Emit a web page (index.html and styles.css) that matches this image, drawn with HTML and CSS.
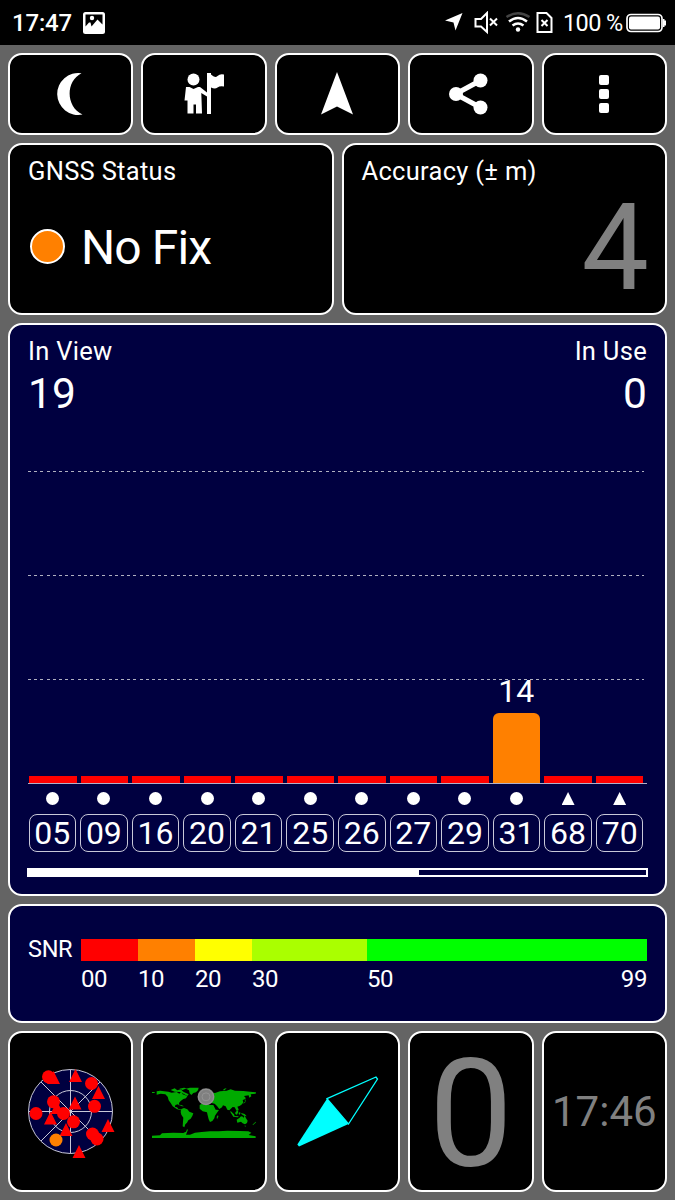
FILE: index.html
```
<!DOCTYPE html>
<html lang="en">
<head>
    <meta charset="utf-8">
    <title>GNSS Status</title>
    <link rel="stylesheet" href="styles.css">
</head>
<body>
    <div class="statusbar">
        <span class="clock">17:47</span>
        <svg class="picture" width="22" height="22" viewBox="0 0 22 22">
            <rect width="22" height="22" rx="2.5" fill="#fff"/>
            <path d="M2.500 2.500h17v10l-5-5-6 7-1-4h-1.500l-3.500 4z" fill="#000"/>
            <circle cx="9" cy="6" r="2.200" fill="#fff"/>
        </svg>
        <svg class="icons" width="108" height="24" viewBox="0 0 108 24">
            <path d="M0 9.500 17.500 2 10.500 19.500 8.500 11.500Z" fill="#fff"/>
            <path d="M30.500 8h5.500l6-6v19l-6-5.500h-5.500z" fill="none" stroke="#fff" stroke-width="2"/>
            <path d="m45 7.500 7 7m0-7-7 7" stroke="#fff" stroke-width="2"/>
            <path d="M61.500 6q11.500-7.500 23 0" fill="none" stroke="#444" stroke-width="2.500"/>
            <path d="M64 10.500q9-7 18 0M67.500 14.500q5.500-4 11 0" fill="none" stroke="#fff" stroke-width="2.500"/>
            <circle cx="73" cy="18.500" r="2.200" fill="#fff"/>
            <path d="M92.500 2h9l5 5v14h-14z" fill="none" stroke="#fff" stroke-width="2"/>
            <path d="m96.500 9 6 6m0-6-6 6" stroke="#fff" stroke-width="2"/>
        </svg>
        <span class="percent">100 %</span>
        <svg class="battery" width="41" height="20" viewBox="0 0 41 20">
            <rect x="1" y="1.500" width="35" height="17" rx="4" fill="none" stroke="#fff" stroke-width="1.700"/>
            <rect x="3" y="3.500" width="31" height="13" rx="2" fill="#fff"/>
            <path d="M37 6h1.500v1.500h1.500v5h-1.500v1.500h-1.500z" fill="#fff"/>
        </svg>
    </div>

    <div class="screen">
        <div class="row toolbar">
            <button class="card">
                <svg width="44" height="44" viewBox="0 0 44 44"><path d="M33.500 1.200A21 21 0 1 0 34.500 42.500C17.500 35 17.500 9 33.500 1.200Z" fill="#fff" transform="translate(-1)"/></svg>
            </button>
            <button class="card">
                <svg width="44" height="44" viewBox="0 0 44 44" fill="#fff">
                    <circle cx="11.500" cy="7.500" r="6"/>
                    <path d="M4 15h3.500l4 2 4.500-2h2l7 5.500v4l-5.700-3.500.7 20.500h-6v-9h-2.500v9h-6V28.500H2.500z"/>
                    <path d="M25 1h4v1.500q4 4 6.500 1.500t6.500-1.500v12q-4-1-6.500 1t-6.500 0v26.500h-4z"/>
                </svg>
            </button>
            <button class="card">
                <svg width="44" height="44" viewBox="0 0 44 44"><path d="M22 0 38 42.500 22 34.500 6 42.500Z" fill="#fff"/></svg>
            </button>
            <button class="card">
                <svg width="44" height="44" viewBox="2.500 0 44 44" fill="#fff">
                    <path d="M34 8.500 9 22 34 35.500" fill="none" stroke="#fff" stroke-width="5"/>
                    <circle cx="34" cy="8.500" r="7"/><circle cx="9.500" cy="22" r="7"/><circle cx="34" cy="35.500" r="7"/>
                </svg>
            </button>
            <button class="card">
                <svg width="44" height="44" viewBox="0 0 44 44" fill="#fff">
                    <rect x="17" y="3" width="10" height="10" rx="2"/>
                    <rect x="17" y="17" width="10" height="10" rx="2"/>
                    <rect x="17" y="31" width="10" height="10" rx="2"/>
                </svg>
            </button>
        </div>

        <div class="row status">
            <div class="card">
                <div class="label">GNSS Status</div>
                <div class="fix"><span class="dot"></span>No Fix</div>
            </div>
            <div class="card">
                <div class="label">Accuracy (± m)</div>
                <div class="accuracy">4</div>
            </div>
        </div>

        <div class="card satellites">
            <div class="counts">
                <div><div class="label">In View</div><div class="count">19</div></div>
                <div class="right"><div class="label">In Use</div><div class="count">0</div></div>
            </div>
            <div class="chart" id="chart"></div>
            <div class="ids" id="ids"></div>
            <div class="scroll"><div class="thumb"></div></div>
        </div>

        <div class="card snr">
            <span class="snr-title">SNR</span>
            <div class="scale">
                <div class="s0"><span>00</span></div>
                <div class="s10"><span>10</span></div>
                <div class="s20"><span>20</span></div>
                <div class="s30"><span>30</span></div>
                <div class="s50"><span>50</span><span>99</span></div>
            </div>
        </div>

        <div class="row pages">
            <div class="card">
                <svg width="121" height="157" viewBox="10 1033 121 157">
                    <circle cx="70.500" cy="1111.500" r="42" fill="#000040"/>
                    <g fill="none" stroke="#c8c8d8" stroke-width="1">
                        <circle cx="70.500" cy="1111.500" r="42"/><circle cx="70.500" cy="1111.500" r="21"/>
                        <path d="M28.500 1111.500h84M70.500 1069.500v84M41 1082l59 59M100 1082l-59 59"/>
                    </g>
                    <g fill="#f00">
                        <circle cx="48.500" cy="1076.800" r="6.500"/><circle cx="91.500" cy="1083.500" r="6.500"/>
                        <circle cx="53.500" cy="1101.800" r="6.500"/><circle cx="94.500" cy="1106.300" r="6.500"/>
                        <circle cx="36" cy="1113.500" r="6.500"/><circle cx="63.500" cy="1113.500" r="6.500"/>
                        <circle cx="73.500" cy="1121.800" r="6.500"/><circle cx="92.500" cy="1134" r="6.500"/>
                        <circle cx="97" cy="1139" r="6.500"/>
                        <path d="M53.500 1071l6.500 13h-13zM75.500 1069l6.500 13h-13zM98.500 1086l6.500 13h-13zM75 1096.500l6.500 13h-13zM57 1101l6.500 13h-13zM50.500 1111.500l6.500 13h-13zM66 1123l6.500 13h-13zM108 1119l6.500 13h-13zM79 1145l6.500 13h-13z"/>
                    </g>
                    <circle cx="56" cy="1140" r="6.500" fill="#ff8000"/>
                </svg>
            </div>
            <div class="card">
                <svg width="121" height="157" viewBox="143 1033 121 157">
                    <g fill="#00aa00" transform="translate(140 1025) scale(.3333)">
                        <!-- Americas and Greenland -->
                        <path d="M36 201h8v3h-8zM50 199L60 197 85 200 95 203 110 201 118 206 124 200 128 208 142 213 138 220 130 222 122 228 117 234 118 242 114 238 106 240 105 246 111 247 115 252 126 254 122 256 110 252 98 244 92 234 86 226 83 215 76 208 62 206 50 209Z"/>
                        <path d="M92 195L104 190 112 196 122 193 130 200 146 208 142 213 132 207 120 201 104 200ZM118 191L132 188 140 190 128 195ZM138 191L150 188 176 188 174 196 168 202 160 204 154 210 149 205 147 196ZM116 239l8 1 8 4-6 0z"/>
                        <path d="M124 252L132 249 142 253 148 260 160 265 157 273 152 281 145 286 141 293 136 298 133 307 128 304 129 290 130 278 124 269 122 261Z"/>
                        <!-- Africa -->
                        <path d="M179 240L188 235 200 236 208 240 220 240 227 254 237 255 230 265 225 272 223 280 217 288 210 291 206 283 203 271 201 262 188 259 179 251Z"/>
                        <path d="M230 276l4-6 1 5-4 8z"/>
                        <!-- Europe and Asia -->
                        <path d="M184 236L186 226 194 220 198 210 208 202 225 204 240 199 260 197 272 193 285 197 310 198 330 200 348 202 347 206 332 208 334 214 328 218 326 211 312 213 318 220 308 226 310 232 306 238 300 242 292 245 295 252 290 258 284 247 278 246 268 256 262 254 257 244 249 241 246 247 238 252 231 243 224 236 212 233 204 230 196 230Z"/>
                        <path d="M248 196l5-5 7-2-6 7zM314 220l3 6-1 6-6 4 1-3 4-3z"/>
                        <!-- Islands and Australia -->
                        <path d="M272 258l10 10 2 5 12 1-2 3-14-2-9-14zM286 262l7-6 2 5-4 8-5-2zM297 262l5 1-3 6-3-2zM291 247l5 6-2 5-4-7zM304 264l10 3 6 7-8-2-8-5z"/>
                        <path d="M290 284L298 279 303 274 309 275 311 279 314 271 318 280 323 287 321 294 315 298 308 295 303 290 292 293ZM313 302h5l-2 3zM345 290l3 2-4 4-5 4-1-2 6-4z"/>
                        <!-- Antarctica -->
                        <path d="M36 339V332L60 331 66 325 100 323 130 324 138 320 141 313 144 314 138 329 150 329 165 323 185 321 210 319 236 319 262 317 300 318 325 319 334 323 326 330 347 334V339Z"/>
                    </g>
                    <circle cx="206" cy="1096.800" r="8.500" fill="#808080"/>
                    <circle cx="206" cy="1096.800" r="7.500" fill="none" stroke="#949494" stroke-width="1"/>
                    <circle cx="206" cy="1096.800" r="4" fill="none" stroke="#949494" stroke-width="1"/>
                </svg>
            </div>
            <div class="card">
                <svg width="121" height="157" viewBox="277 1033 121 157">
                    <path d="M327 1098.700 297.300 1144.500 299 1146.500 348.500 1124Z" fill="#0ff"/>
                    <path d="M327 1098.700 376 1077 377.500 1079 348.500 1124Z" fill="none" stroke="#0ff" stroke-width="1.300"/>
                </svg>
            </div>
            <div class="card speed">0</div>
            <div class="card time">17:46</div>
        </div>
    </div>

    <script>
        const sats = [
            ['05', 0], ['09', 0], ['16', 0], ['20', 0], ['21', 0], ['25', 0],
            ['26', 0], ['27', 0], ['29', 0], ['31', 14], ['68', 0], ['70', 0]
        ];
        const chart = document.getElementById('chart');
        const ids = document.getElementById('ids');

        sats.forEach(([id, snr]) => {
            // empty bars keep a minimum height
            const height = snr ? snr * 5 : 7;
            chart.innerHTML += `<div class="col">${snr ? `<span>${snr}</span>` : ''}
                <div class="bar ${snr ? 'weak' : ''}" style="height: ${height}px"></div></div>`;
            // GLONASS satellites are numbered from 65
            ids.innerHTML += `<div class="sat"><div class="${id > 64 ? 'triangle' : 'circle'}"></div>
                <div class="chip">${id}</div></div>`;
        });
    </script>
</body>
</html>
```
FILE: styles.css
```
* {
    box-sizing: border-box;
}

body {
    margin: 0;
    width: 675px;
    height: 1200px;
    background: #646464;
    color: white;
    font-family: Roboto, sans-serif;
    overflow: hidden;
}

svg {
    display: block;
    flex: none;
}

.statusbar {
    display: flex;
    align-items: center;
    height: 45px;
    padding: 1px 8px 0 12px;
    background: black;
}

.clock {
    width: 71px;
    font-size: 24px;
    font-weight: 500;
    letter-spacing: -0.2px;
}

.icons {
    margin-left: auto;
}

.percent {
    width: 63px;
    margin-left: 10px;
    font-size: 23.5px;
    letter-spacing: -0.6px;
    white-space: nowrap;
}

.screen {
    display: grid;
    grid-template-rows: 82px 172px 573px 119px 161px;
    gap: 8px;
    padding: 8px;
}

.row {
    display: grid;
    grid-template-columns: repeat(5, 1fr);
    gap: 8px;
}

.status {
    grid-template-columns: 1fr 1fr;
}

.card {
    min-width: 0;
    border: 2px solid white;
    border-radius: 14px;
    background: black;
    color: white;
}

.toolbar .card {
    display: flex;
    align-items: center;
    justify-content: center;
    padding: 0;
}

.status .card {
    display: flex;
    flex-direction: column;
    padding: 10px 18px 0 18px;
}

.label {
    font-size: 25.5px;
    line-height: 32px;
    letter-spacing: 0.3px;
    white-space: nowrap;
}

.fix {
    display: flex;
    align-items: center;
    margin-top: 31px;
    font-size: 48px;
    line-height: 60px;
    letter-spacing: -0.9px;
}

.dot {
    width: 35px;
    height: 35px;
    margin: 0 16px 3px 2px;
    border: 2px solid white;
    border-radius: 50%;
    background: #ff8000;
}

.accuracy {
    margin: 1px -2px 0 0;
    text-align: right;
    color: #808080;
    font-size: 120px;
    line-height: 120px;
}

.satellites {
    display: flex;
    flex-direction: column;
    padding: 10px 18px 0;
    background: #000040;
}

.counts {
    display: flex;
    justify-content: space-between;
    height: 136px;
}

.right {
    text-align: right;
}

.count {
    font-size: 42.5px;
    line-height: 54px;
}

.chart {
    display: flex;
    align-items: flex-end;
    gap: 4px;
    height: 313px;
    padding: 0 4px 0 1px;
    border-bottom: 1px solid #b0b0c8;
    background:
        repeating-linear-gradient(to right, #b0b0c0 0 3px, #000040 3px 6.2px) 0 0 / 616px 1px no-repeat,
        repeating-linear-gradient(to right, #b0b0c0 0 3px, #000040 3px 6.2px) 0 104px / 616px 1px no-repeat,
        repeating-linear-gradient(to right, #b0b0c0 0 3px, #000040 3px 6.2px) 0 208px / 616px 1px no-repeat;
}

.col {
    flex: 1;
    text-align: center;
    font-size: 32px;
    line-height: 43px;
}

.col span {
    display: block;
}

.bar {
    background: #ff0000;
}

.weak {
    border-radius: 6px 6px 0 0;
    background: #ff8000;
}

.ids {
    display: flex;
    gap: 4px;
    padding: 8px 3.5px 0 0.5px;
}

.sat {
    flex: 1;
    display: flex;
    flex-direction: column;
    align-items: center;
}

.circle {
    width: 13px;
    height: 13px;
    border-radius: 50%;
    background: white;
}

.triangle {
    width: 13px;
    height: 13px;
    background: white;
    clip-path: polygon(50% 0, 100% 100%, 0 100%);
}

.chip {
    width: 100%;
    height: 38px;
    margin-top: 9px;
    border: 1px solid #c8c8d8;
    border-radius: 8px;
    font-size: 32px;
    line-height: 36px;
    text-align: center;
}

.scroll {
    height: 9px;
    margin: 16px -1px 0;
    border: 2px solid white;
}

.thumb {
    width: 390px;
    height: 5px;
    background: white;
}

.snr {
    display: flex;
    padding: 33px 18px 0;
    background: #000040;
    font-size: 24px;
}

.snr-title {
    width: 53px;
    font-size: 23.5px;
    line-height: 20px;
    letter-spacing: -0.3px;
}

.scale {
    display: grid;
    grid-template-columns: 57px 57px 57px 115px 1fr;
    flex: 1;
}

.scale div {
    display: flex;
    justify-content: space-between;
    height: 22px;
}

.scale span {
    margin-top: 26px;
    line-height: 28px;
    letter-spacing: -0.4px;
}

.s0 { background: #ff0000; }
.s10 { background: #ff8000; }
.s20 { background: #ffff00; }
.s30 { background: #aaff00; }
.s50 { background: #00ff00; }

.speed, .time {
    display: flex;
    align-items: center;
    justify-content: center;
    color: #808080;
    font-size: 150px;
    line-height: 1;
}

.speed {
    padding-top: 6px;
}

.time {
    font-size: 42px;
}
```
